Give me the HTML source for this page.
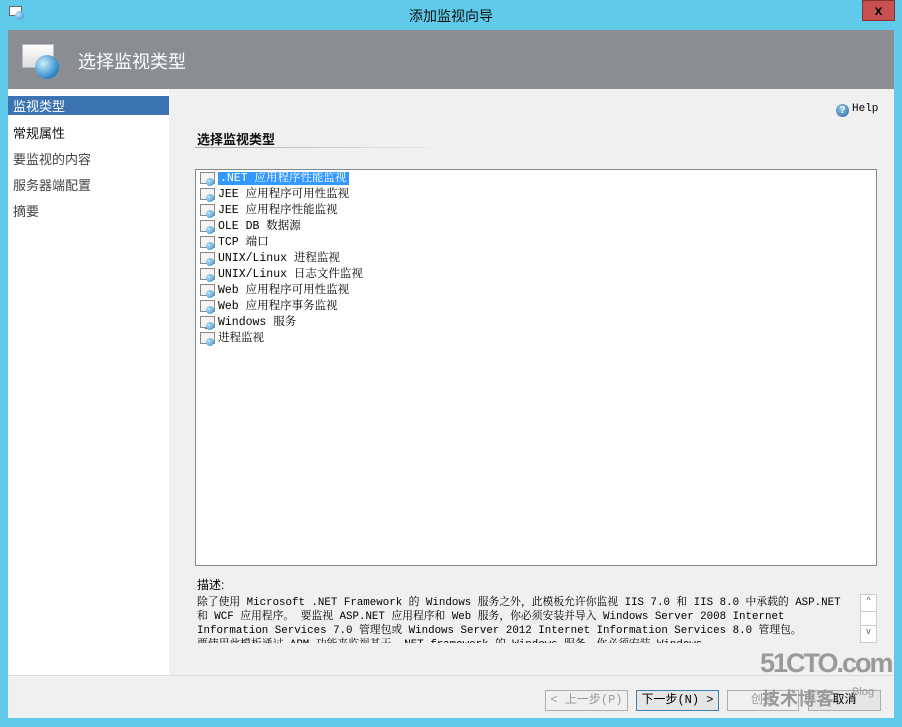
<!DOCTYPE html>
<html><head><meta charset="utf-8"><style>
*{margin:0;padding:0;box-sizing:border-box}
body{width:902px;height:727px;background:#5fcaea;position:relative;overflow:hidden;font-family:"Liberation Sans","Noto Sans CJK SC",sans-serif;}
.abs{position:absolute}
.title{left:0;top:6px;width:902px;text-align:center;font-size:14px;color:#111}
.close{left:862px;top:0;width:33px;height:21px;background:#c75050;border:1px solid #8a3030;color:#000;font-weight:bold;text-align:center;font-size:14px;line-height:18px}
.hdr{left:8px;top:30px;width:886px;height:59px;background:#8a8d91}
.hdrt{left:78px;top:48px;color:#fff;font-size:18px}
.nav{left:8px;top:89px;width:161px;height:586px;background:#fff}
.main{left:169px;top:89px;width:725px;height:586px;background:#f0f0f0}
.bot{left:8px;top:675px;width:886px;height:43px;background:#f0f0f0;border-top:1px solid #dcdcdc}
.ni{position:absolute;left:5px;font-size:13px;color:#333}
.list{left:195px;top:169px;width:682px;height:397px;background:#fff;border:1px solid #828790}
.li{position:absolute;left:4px;height:16px;font-family:"Liberation Mono","Noto Serif CJK SC",monospace;font-size:11.5px;line-height:16px;color:#000;white-space:nowrap}
.li span{padding:0 2px}
.ic{display:inline-block;width:16px;height:15px;vertical-align:top;position:relative;margin-right:2px}
.ic:before{content:"";position:absolute;left:0;top:1px;width:13px;height:10px;border:1px solid #888;background:#f4f4f4}
.ic:after{content:"";position:absolute;left:6px;top:7px;width:8px;height:8px;border-radius:50%;background:radial-gradient(circle at 35% 35%,#bfe6fb,#2a86c8)}
.desc{left:197px;font-family:"Liberation Mono","Noto Serif CJK SC",monospace;font-size:10.8px;color:#000;white-space:nowrap}
.btn{top:690px;height:21px;border:1px solid #adadad;background:#e5e5e5;font-size:12px;text-align:center;line-height:19px;font-family:"Liberation Mono","Noto Sans CJK SC",monospace}
</style></head><body>
<div class="abs" style="left:9px;top:6px;width:13px;height:10px;border:1px solid #666;background:#fff"></div>
<div class="abs" style="left:15px;top:11px;width:9px;height:9px;border-radius:50%;background:radial-gradient(circle at 35% 35%,#bfe6fb,#2a86c8)"></div>
<div class="abs title">添加监视向导</div>
<div class="abs close">x</div>
<div class="abs hdr"></div>
<div class="abs" style="left:22px;top:44px;width:32px;height:24px;background:linear-gradient(#fff,#ddd);border:1px solid #bbb"></div>
<div class="abs" style="left:35px;top:55px;width:24px;height:24px;border-radius:50%;background:radial-gradient(circle at 35% 35%,#cdeeff,#2a86c8 70%,#1b6aa8)"></div>
<div class="abs hdrt">选择监视类型</div>
<div class="abs nav">
<div style="position:absolute;left:0;top:7px;width:161px;height:19px;background:#3b74b1"></div>
<div class="ni" style="top:7px;color:#fff">监视类型</div>
<div class="ni" style="top:34px;color:#111">常规属性</div>
<div class="ni" style="top:60px;color:#444">要监视的内容</div>
<div class="ni" style="top:86px;color:#444">服务器端配置</div>
<div class="ni" style="top:112px;color:#444">摘要</div>
</div>
<div class="abs main"></div>
<div class="abs" style="left:836px;top:104px;width:13px;height:13px;border-radius:50%;background:radial-gradient(circle at 40% 35%,#9cd,#2660b0);color:#fff;font-size:10px;text-align:center;line-height:13px;font-weight:bold">?</div>
<div class="abs" style="left:852px;top:103px;font-family:'Liberation Mono',monospace;font-size:11px">Help</div>
<div class="abs" style="left:197px;top:129px;font-size:13px;font-weight:bold;color:#111">选择监视类型</div>
<div class="abs" style="left:195px;top:147px;width:235px;height:1px;background:linear-gradient(90deg,#aaa,#e8e8e8)"></div>
<div class="abs list">
<div class="li" style="top:1px"><i class="ic"></i><span style="background:#3399ff;color:#fff">.NET 应用程序性能监视</span></div>
<div class="li" style="top:17px"><i class="ic"></i>JEE 应用程序可用性监视</div>
<div class="li" style="top:33px"><i class="ic"></i>JEE 应用程序性能监视</div>
<div class="li" style="top:49px"><i class="ic"></i>OLE DB 数据源</div>
<div class="li" style="top:65px"><i class="ic"></i>TCP 端口</div>
<div class="li" style="top:81px"><i class="ic"></i>UNIX/Linux 进程监视</div>
<div class="li" style="top:97px"><i class="ic"></i>UNIX/Linux 日志文件监视</div>
<div class="li" style="top:113px"><i class="ic"></i>Web 应用程序可用性监视</div>
<div class="li" style="top:129px"><i class="ic"></i>Web 应用程序事务监视</div>
<div class="li" style="top:145px"><i class="ic" style="background:radial-gradient(circle,#8890c0,#556 60%,transparent 62%)"></i>Windows 服务</div>
<div class="li" style="top:161px"><i class="ic"></i>进程监视</div>
</div>
<div class="abs" style="left:197px;top:576px;font-size:12px">描述:</div>
<div class="abs desc" style="top:594px">除了使用 Microsoft .NET Framework 的 Windows 服务之外，此模板允许你监视 IIS 7.0 和 IIS 8.0 中承载的 ASP.NET</div>
<div class="abs desc" style="top:608px">和 WCF 应用程序。 要监视 ASP.NET 应用程序和 Web 服务，你必须安装并导入 Windows Server 2008 Internet</div>
<div class="abs desc" style="top:622px">Information Services 7.0 管理包或 Windows Server 2012 Internet Information Services 8.0 管理包。</div>
<div class="abs" style="left:197px;top:636px;width:650px;height:7px;overflow:hidden"><div class="desc" style="position:absolute;left:0;top:0">要使用此模板通过 APM 功能来监视基于 .NET framework 的 Windows 服务，你必须安装 Windows</div></div>
<div class="abs" style="left:860px;top:594px;width:17px;height:49px;border:1px solid #ccc;background:#fff"></div>
<div class="abs" style="left:861px;top:595px;width:15px;height:17px;border-bottom:1px solid #ccc;font-size:9px;text-align:center;color:#555">^</div>
<div class="abs" style="left:861px;top:625px;width:15px;height:17px;border-top:1px solid #ccc;font-size:9px;text-align:center;color:#555">v</div>
<div class="abs bot"></div>
<div class="abs btn" style="left:545px;width:83px;color:#999;background:#f0f0f0">&lt; 上一步(P)</div>
<div class="abs btn" style="left:636px;width:83px;border-color:#3c7fb1">下一步(N) &gt;</div>
<div class="abs btn" style="left:727px;width:72px;color:#999;background:#f0f0f0">创建</div>
<div class="abs btn" style="left:808px;width:73px">取消</div>
<div class="abs" style="left:760px;top:648px;font-size:27px;font-weight:bold;color:#9a9a9a;letter-spacing:-2px;font-family:'Liberation Sans Narrow','Liberation Sans',sans-serif">51CTO.com</div>
<div class="abs" style="left:762px;top:685px;font-size:18px;font-weight:bold;color:#999">技术博客</div>
<div class="abs" style="left:852px;top:686px;font-size:11px;color:#999">Blog</div>
</body></html>
